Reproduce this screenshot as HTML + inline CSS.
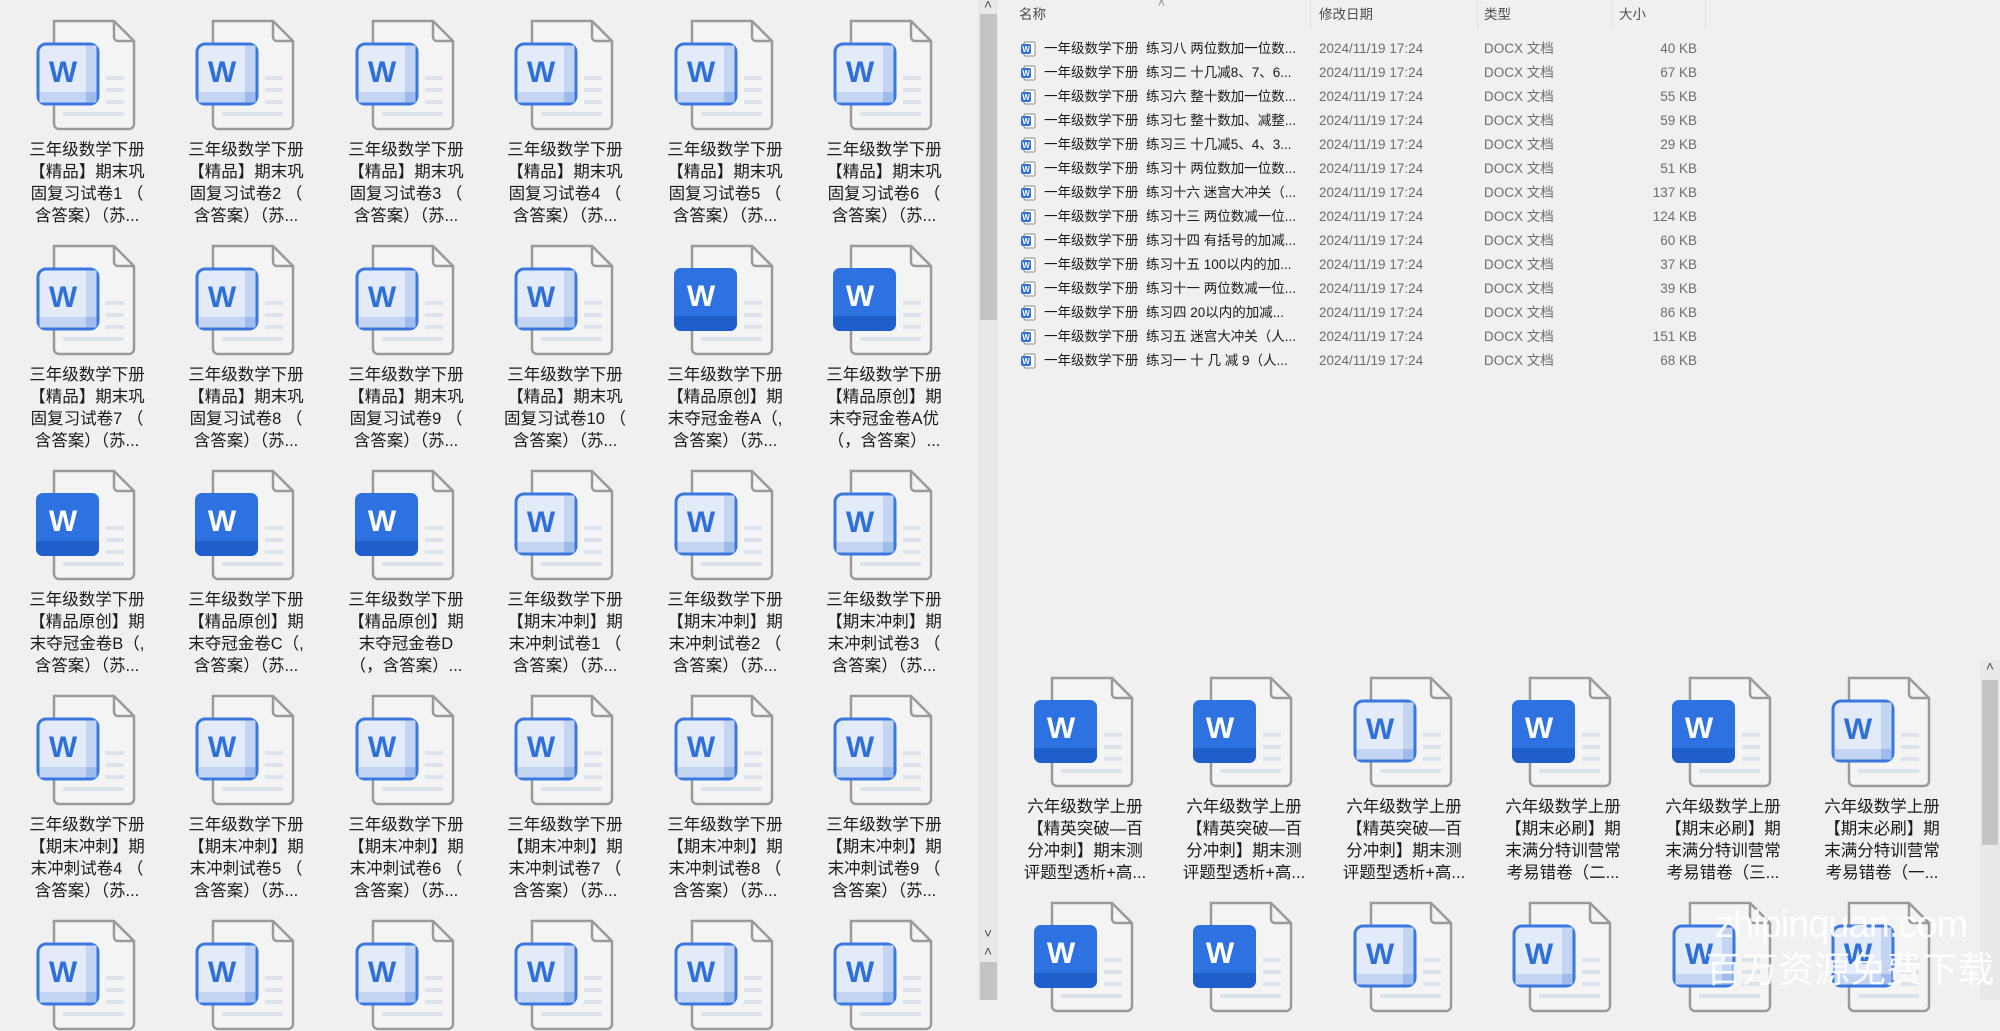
<!DOCTYPE html>
<html><head><meta charset="utf-8">
<style>
*{margin:0;padding:0;box-sizing:border-box}
body{width:2000px;height:1000px;overflow:hidden;background:#f0f0f0;position:relative;font-family:"Liberation Sans","Noto Sans CJK SC",sans-serif;color:#1a1a1a}
.c{position:absolute;width:170px}
.c svg{position:absolute;left:34px;top:19px;width:100px;height:112px}
.c .t{position:absolute;top:139px;left:0;width:170px;text-align:center;font-size:16.5px;line-height:22px;white-space:nowrap}
.hd{position:absolute;top:0;height:30px;font-size:13.5px;color:#4d4d4d;line-height:30px}
.sep{position:absolute;top:0;height:30px;width:1px;background:#e2e2e2}
.r{position:absolute;left:1018px;height:24px;font-size:13.5px;line-height:24px;white-space:nowrap;width:700px}
.r svg{position:absolute;left:2px;top:4px;width:16px;height:16px}
.r .n{position:absolute;left:26px;color:#1a1a1a}
.r .d{position:absolute;left:301px;color:#6d6d6d}
.r .y{position:absolute;left:466px;color:#6d6d6d}
.r .s{position:absolute;right:21px;color:#6d6d6d}
.sb{position:absolute;background:#e9e9e9}
.th{position:absolute;background:#c4c4c4}
.ar{position:absolute;font-size:14px;color:#555;width:20px;text-align:center}
</style></head><body>
<svg width="0" height="0" style="position:absolute">
<defs>
<symbol id="pg" viewBox="0 0 100 112">
<path d="M18 2 H78 L98 22 V105 a5 5 0 0 1 -5 5 H23 a5 5 0 0 1 -5 -5 Z" fill="#f4f4f4" stroke="#9a9a9a" stroke-width="2.5"/>
<path d="M78 2 V18 a4 4 0 0 0 4 4 H98" fill="none" stroke="#9a9a9a" stroke-width="2.5"/>
<rect x="70" y="57" width="18" height="4" fill="#dde3ec"/>
<rect x="70" y="69" width="18" height="4" fill="#dde3ec"/>
<rect x="70" y="81" width="18" height="4" fill="#dde3ec"/>
<rect x="27" y="93" width="61" height="4" fill="#dde3ec"/>
</symbol>
<symbol id="L" viewBox="0 0 100 112">
<use href="#pg"/>
<rect x="2" y="25" width="60" height="60" rx="8" fill="#e3ebf9" stroke="#3a78e0" stroke-width="3"/>
<rect x="50" y="26.5" width="10.5" height="57" fill="#c3d5f2"/>
<rect x="3.5" y="73" width="57" height="10.5" fill="#c3d5f2"/>
<rect x="50" y="73" width="10.5" height="10.5" fill="#9dbbeb"/>
<text x="27" y="63" text-anchor="middle" font-family="Liberation Sans,sans-serif" font-weight="bold" font-size="30" fill="#2f6fd8">W</text>
</symbol>
<symbol id="S" viewBox="0 0 100 112">
<use href="#pg"/>
<rect x="0" y="24" width="63" height="63" rx="7" fill="#2d72e0"/>
<path d="M0 72 H63 V80 a7 7 0 0 1 -7 7 H7 a7 7 0 0 1 -7 -7 Z" fill="#1f5fcc"/>
<text x="27" y="62" text-anchor="middle" font-family="Liberation Sans,sans-serif" font-weight="bold" font-size="30" fill="#fff">W</text>
</symbol>
<symbol id="m" viewBox="0 0 16 16">
<rect x="4" y="1" width="11" height="14" rx="1.5" fill="#fff" stroke="#8a8a8a"/>
<rect x="1" y="3" width="10" height="10" rx="2" fill="#2f6fd8"/>
<text x="6" y="11" text-anchor="middle" font-family="Liberation Sans,sans-serif" font-weight="bold" font-size="8" fill="#fff">W</text>
</symbol>
</defs></svg>

<div class="c" style="left:2px;top:0"><svg><use href="#L"/></svg><div class="t">三年级数学下册<br>【精品】期末巩<br>固复习试卷1 （<br>含答案）（苏...</div></div>
<div class="c" style="left:161px;top:0"><svg><use href="#L"/></svg><div class="t">三年级数学下册<br>【精品】期末巩<br>固复习试卷2 （<br>含答案）（苏...</div></div>
<div class="c" style="left:321px;top:0"><svg><use href="#L"/></svg><div class="t">三年级数学下册<br>【精品】期末巩<br>固复习试卷3 （<br>含答案）（苏...</div></div>
<div class="c" style="left:480px;top:0"><svg><use href="#L"/></svg><div class="t">三年级数学下册<br>【精品】期末巩<br>固复习试卷4 （<br>含答案）（苏...</div></div>
<div class="c" style="left:640px;top:0"><svg><use href="#L"/></svg><div class="t">三年级数学下册<br>【精品】期末巩<br>固复习试卷5 （<br>含答案）（苏...</div></div>
<div class="c" style="left:799px;top:0"><svg><use href="#L"/></svg><div class="t">三年级数学下册<br>【精品】期末巩<br>固复习试卷6 （<br>含答案）（苏...</div></div>
<div class="c" style="left:2px;top:225px"><svg><use href="#L"/></svg><div class="t">三年级数学下册<br>【精品】期末巩<br>固复习试卷7 （<br>含答案）（苏...</div></div>
<div class="c" style="left:161px;top:225px"><svg><use href="#L"/></svg><div class="t">三年级数学下册<br>【精品】期末巩<br>固复习试卷8 （<br>含答案）（苏...</div></div>
<div class="c" style="left:321px;top:225px"><svg><use href="#L"/></svg><div class="t">三年级数学下册<br>【精品】期末巩<br>固复习试卷9 （<br>含答案）（苏...</div></div>
<div class="c" style="left:480px;top:225px"><svg><use href="#L"/></svg><div class="t">三年级数学下册<br>【精品】期末巩<br>固复习试卷10 （<br>含答案）（苏...</div></div>
<div class="c" style="left:640px;top:225px"><svg><use href="#S"/></svg><div class="t">三年级数学下册<br>【精品原创】期<br>末夺冠金卷A（,<br>含答案）（苏...</div></div>
<div class="c" style="left:799px;top:225px"><svg><use href="#S"/></svg><div class="t">三年级数学下册<br>【精品原创】期<br>末夺冠金卷A优<br>（，含答案）...</div></div>
<div class="c" style="left:2px;top:450px"><svg><use href="#S"/></svg><div class="t">三年级数学下册<br>【精品原创】期<br>末夺冠金卷B（,<br>含答案）（苏...</div></div>
<div class="c" style="left:161px;top:450px"><svg><use href="#S"/></svg><div class="t">三年级数学下册<br>【精品原创】期<br>末夺冠金卷C（,<br>含答案）（苏...</div></div>
<div class="c" style="left:321px;top:450px"><svg><use href="#S"/></svg><div class="t">三年级数学下册<br>【精品原创】期<br>末夺冠金卷D<br>（，含答案）...</div></div>
<div class="c" style="left:480px;top:450px"><svg><use href="#L"/></svg><div class="t">三年级数学下册<br>【期末冲刺】期<br>末冲刺试卷1 （<br>含答案）（苏...</div></div>
<div class="c" style="left:640px;top:450px"><svg><use href="#L"/></svg><div class="t">三年级数学下册<br>【期末冲刺】期<br>末冲刺试卷2 （<br>含答案）（苏...</div></div>
<div class="c" style="left:799px;top:450px"><svg><use href="#L"/></svg><div class="t">三年级数学下册<br>【期末冲刺】期<br>末冲刺试卷3 （<br>含答案）（苏...</div></div>
<div class="c" style="left:2px;top:675px"><svg><use href="#L"/></svg><div class="t">三年级数学下册<br>【期末冲刺】期<br>末冲刺试卷4 （<br>含答案）（苏...</div></div>
<div class="c" style="left:161px;top:675px"><svg><use href="#L"/></svg><div class="t">三年级数学下册<br>【期末冲刺】期<br>末冲刺试卷5 （<br>含答案）（苏...</div></div>
<div class="c" style="left:321px;top:675px"><svg><use href="#L"/></svg><div class="t">三年级数学下册<br>【期末冲刺】期<br>末冲刺试卷6 （<br>含答案）（苏...</div></div>
<div class="c" style="left:480px;top:675px"><svg><use href="#L"/></svg><div class="t">三年级数学下册<br>【期末冲刺】期<br>末冲刺试卷7 （<br>含答案）（苏...</div></div>
<div class="c" style="left:640px;top:675px"><svg><use href="#L"/></svg><div class="t">三年级数学下册<br>【期末冲刺】期<br>末冲刺试卷8 （<br>含答案）（苏...</div></div>
<div class="c" style="left:799px;top:675px"><svg><use href="#L"/></svg><div class="t">三年级数学下册<br>【期末冲刺】期<br>末冲刺试卷9 （<br>含答案）（苏...</div></div>
<div class="c" style="left:2px;top:900px"><svg><use href="#L"/></svg></div>
<div class="c" style="left:161px;top:900px"><svg><use href="#L"/></svg></div>
<div class="c" style="left:321px;top:900px"><svg><use href="#L"/></svg></div>
<div class="c" style="left:480px;top:900px"><svg><use href="#L"/></svg></div>
<div class="c" style="left:640px;top:900px"><svg><use href="#L"/></svg></div>
<div class="c" style="left:799px;top:900px"><svg><use href="#L"/></svg></div>

<div class="sb" style="left:978px;top:0;width:20px;height:1000px"></div>
<div class="th" style="left:980px;top:14px;width:17px;height:306px"></div>
<div class="ar" style="left:978px;top:-4px">˄</div>
<div class="ar" style="left:978px;top:925px">˅</div>
<div class="ar" style="left:978px;top:943px">˄</div>
<div class="th" style="left:980px;top:962px;width:17px;height:38px"></div>

<div class="hd" style="left:1019px">名称</div>
<div class="hd" style="left:1158px;top:-12px;font-size:12px;color:#888">˄</div>
<div class="sep" style="left:1310px"></div>
<div class="hd" style="left:1319px">修改日期</div>
<div class="sep" style="left:1477px"></div>
<div class="hd" style="left:1484px">类型</div>
<div class="sep" style="left:1612px"></div>
<div class="hd" style="left:1619px">大小</div>
<div class="sep" style="left:1705px"></div>

<div class="r" style="top:37px"><svg><use href="#m"/></svg><span class="n">一年级数学下册&nbsp; 练习八 两位数加一位数...</span><span class="d">2024/11/19 17:24</span><span class="y">DOCX 文档</span><span class="s">40 KB</span></div>
<div class="r" style="top:61px"><svg><use href="#m"/></svg><span class="n">一年级数学下册&nbsp; 练习二 十几减8、7、6...</span><span class="d">2024/11/19 17:24</span><span class="y">DOCX 文档</span><span class="s">67 KB</span></div>
<div class="r" style="top:85px"><svg><use href="#m"/></svg><span class="n">一年级数学下册&nbsp; 练习六 整十数加一位数...</span><span class="d">2024/11/19 17:24</span><span class="y">DOCX 文档</span><span class="s">55 KB</span></div>
<div class="r" style="top:109px"><svg><use href="#m"/></svg><span class="n">一年级数学下册&nbsp; 练习七 整十数加、减整...</span><span class="d">2024/11/19 17:24</span><span class="y">DOCX 文档</span><span class="s">59 KB</span></div>
<div class="r" style="top:133px"><svg><use href="#m"/></svg><span class="n">一年级数学下册&nbsp; 练习三 十几减5、4、3...</span><span class="d">2024/11/19 17:24</span><span class="y">DOCX 文档</span><span class="s">29 KB</span></div>
<div class="r" style="top:157px"><svg><use href="#m"/></svg><span class="n">一年级数学下册&nbsp; 练习十 两位数加一位数...</span><span class="d">2024/11/19 17:24</span><span class="y">DOCX 文档</span><span class="s">51 KB</span></div>
<div class="r" style="top:181px"><svg><use href="#m"/></svg><span class="n">一年级数学下册&nbsp; 练习十六 迷宫大冲关（...</span><span class="d">2024/11/19 17:24</span><span class="y">DOCX 文档</span><span class="s">137 KB</span></div>
<div class="r" style="top:205px"><svg><use href="#m"/></svg><span class="n">一年级数学下册&nbsp; 练习十三 两位数减一位...</span><span class="d">2024/11/19 17:24</span><span class="y">DOCX 文档</span><span class="s">124 KB</span></div>
<div class="r" style="top:229px"><svg><use href="#m"/></svg><span class="n">一年级数学下册&nbsp; 练习十四 有括号的加减...</span><span class="d">2024/11/19 17:24</span><span class="y">DOCX 文档</span><span class="s">60 KB</span></div>
<div class="r" style="top:253px"><svg><use href="#m"/></svg><span class="n">一年级数学下册&nbsp; 练习十五 100以内的加...</span><span class="d">2024/11/19 17:24</span><span class="y">DOCX 文档</span><span class="s">37 KB</span></div>
<div class="r" style="top:277px"><svg><use href="#m"/></svg><span class="n">一年级数学下册&nbsp; 练习十一 两位数减一位...</span><span class="d">2024/11/19 17:24</span><span class="y">DOCX 文档</span><span class="s">39 KB</span></div>
<div class="r" style="top:301px"><svg><use href="#m"/></svg><span class="n">一年级数学下册&nbsp; 练习四 20以内的加减...</span><span class="d">2024/11/19 17:24</span><span class="y">DOCX 文档</span><span class="s">86 KB</span></div>
<div class="r" style="top:325px"><svg><use href="#m"/></svg><span class="n">一年级数学下册&nbsp; 练习五 迷宫大冲关（人...</span><span class="d">2024/11/19 17:24</span><span class="y">DOCX 文档</span><span class="s">151 KB</span></div>
<div class="r" style="top:349px"><svg><use href="#m"/></svg><span class="n">一年级数学下册&nbsp; 练习一 十 几 减 9（人...</span><span class="d">2024/11/19 17:24</span><span class="y">DOCX 文档</span><span class="s">68 KB</span></div>

<div class="c" style="left:1000px;top:657px"><svg><use href="#S"/></svg><div class="t">六年级数学上册<br>【精英突破—百<br>分冲刺】期末测<br>评题型透析+高...</div></div>
<div class="c" style="left:1159px;top:657px"><svg><use href="#S"/></svg><div class="t">六年级数学上册<br>【精英突破—百<br>分冲刺】期末测<br>评题型透析+高...</div></div>
<div class="c" style="left:1319px;top:657px"><svg><use href="#L"/></svg><div class="t">六年级数学上册<br>【精英突破—百<br>分冲刺】期末测<br>评题型透析+高...</div></div>
<div class="c" style="left:1478px;top:657px"><svg><use href="#S"/></svg><div class="t">六年级数学上册<br>【期末必刷】期<br>末满分特训营常<br>考易错卷（二...</div></div>
<div class="c" style="left:1638px;top:657px"><svg><use href="#S"/></svg><div class="t">六年级数学上册<br>【期末必刷】期<br>末满分特训营常<br>考易错卷（三...</div></div>
<div class="c" style="left:1797px;top:657px"><svg><use href="#L"/></svg><div class="t">六年级数学上册<br>【期末必刷】期<br>末满分特训营常<br>考易错卷（一...</div></div>
<div class="c" style="left:1000px;top:882px"><svg><use href="#S"/></svg></div>
<div class="c" style="left:1159px;top:882px"><svg><use href="#S"/></svg></div>
<div class="c" style="left:1319px;top:882px"><svg><use href="#L"/></svg></div>
<div class="c" style="left:1478px;top:882px"><svg><use href="#L"/></svg></div>
<div class="c" style="left:1638px;top:882px"><svg><use href="#L"/></svg></div>
<div class="c" style="left:1797px;top:882px"><svg><use href="#L"/></svg></div>

<div class="sb" style="left:1980px;top:660px;width:20px;height:340px"></div>
<div class="ar" style="left:1980px;top:658px">˄</div>
<div class="th" style="left:1982px;top:680px;width:16px;height:165px"></div>

<div style="position:absolute;left:1715px;top:904px;font-size:38px;color:rgba(255,255,255,0.9);font-family:'Liberation Sans',sans-serif;letter-spacing:-1px">zhipinquan.com</div>
<div style="position:absolute;left:1706px;top:948px;font-size:36px;color:rgba(255,255,255,0.9);font-family:'Liberation Sans','Noto Sans CJK SC',sans-serif;line-height:44px">百万资源免费下载</div>
</body></html>
